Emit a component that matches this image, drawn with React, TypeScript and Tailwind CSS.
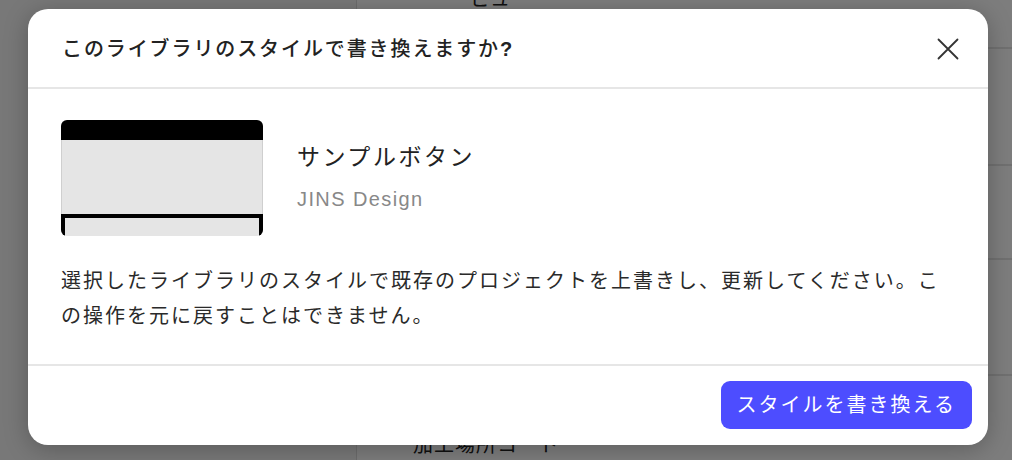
const font = "font-['Liberation_Sans','Noto_Sans_CJK_JP',sans-serif]";

function BackgroundPage() {
  return (
    <div className="flex h-full w-full bg-white">
      <div className="w-[357px] shrink-0 border-r border-[#dcdcdc] bg-[#f4f4f4]" />
      <div className="flex flex-1 flex-col">
        <div className="-mt-[16px] h-[66px] border-b-2 border-[#e4e4e4] pl-[113px] text-[20px] text-[#222]">
          ビュー
        </div>
        <div className="h-[118px] border-b-2 border-[#e4e4e4]" />
        <div className="h-[95px] border-b-2 border-[#e4e4e4]" />
        <div className="h-[117px] border-b-2 border-[#e4e4e4]" />
        <div className="pl-[56px] pt-[54px] text-[20px] tracking-[0.05em] text-[#222]">加工場所コード</div>
      </div>
    </div>
  );
}

function Thumbnail() {
  return (
    <div className="flex h-[116px] w-[202px] shrink-0 flex-col overflow-hidden rounded-[6px]">
      <div className="h-[20px] bg-black" />
      <div className="h-[74px] border-x border-[#cfcfcf] bg-[#e5e5e5]" />
      <div className="flex-1 border-x-4 border-t-4 border-black bg-[#e5e5e5]" />
    </div>
  );
}

function CloseIcon() {
  return (
    <svg width="22" height="22" viewBox="0 0 22 22" fill="none" stroke="#333" strokeWidth="1.8" strokeLinecap="round">
      <path d="M1.5 1.5L20.5 20.5M20.5 1.5L1.5 20.5" />
    </svg>
  );
}

export default function App() {
  return (
    <div className={`relative h-[460px] w-[1012px] overflow-hidden ${font}`}>
      <BackgroundPage />
      <div className="absolute inset-0 bg-black/[0.51] pl-[28px] pt-[9px]">
        <div className="flex h-[436px] w-[960px] flex-col overflow-hidden rounded-[20px] bg-white shadow-[0_4px_24px_rgba(0,0,0,0.25)]">
          <div className="flex h-[80px] shrink-0 items-center justify-between border-b-2 border-[#e6e6e6] pl-[34px] pr-[29px] pt-[1px]">
            <h2 className="text-[20px] font-medium tracking-[0.095em] text-[#222]">
              このライブラリのスタイルで書き換えますか<span className="font-semibold">?</span>
            </h2>
            <button className="flex h-[22px] w-[22px] items-center justify-center">
              <CloseIcon />
            </button>
          </div>

          <div className="flex flex-1 flex-col px-[33px] pt-[31px]">
            <div className="flex items-center gap-[34px]">
              <Thumbnail />
              <div className="flex flex-col gap-[10px] pb-[2px]">
                <div className="text-[23px] leading-[34px] tracking-[0.11em] text-[#222]">サンプルボタン</div>
                <div className="text-[20px] leading-[30px] tracking-[0.07em] text-[#888]">JINS Design</div>
              </div>
            </div>
            <p className="mt-[28px] text-[20px] leading-[35px] tracking-[0.1em] text-[#2a2a2a]">
              選択したライブラリのスタイルで既存のプロジェクトを上書きし、更新してください。この操作を元に戻すことはできません。
            </p>
          </div>

          <div className="flex shrink-0 justify-end border-t-2 border-[#e6e6e6] pb-[16px] pr-[16px] pt-[15px]">
            <button className="h-[48px] rounded-[9px] bg-[#4d4dff] px-[16px] text-[20px] tracking-[0.1em] text-white">
              スタイルを書き換える
            </button>
          </div>
        </div>
      </div>
    </div>
  );
}
